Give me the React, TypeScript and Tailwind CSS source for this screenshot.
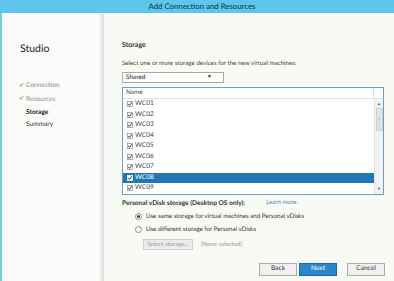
import React from "react";

const font = { fontFamily: 'Lato, "Open Sans", sans-serif' };

function Check({ light }: { light?: boolean }) {
  return (
    <svg width="6" height="6" viewBox="0 0 6 6" className="shrink-0">
      <rect x="0.4" y="0.4" width="5.2" height="5.2" fill="#fff" stroke={light ? "#fff" : "#8a8a8a"} strokeWidth="0.7" />
      <path d="M1.2 3.1 L2.5 4.4 L4.9 1.3" fill="none" stroke="#222" strokeWidth="1" />
    </svg>
  );
}

const rows = ["WC01", "WC02", "WC03", "WC04", "WC05", "WC06", "WC07", "WC08", "WC09"];

export default function App() {
  return (
    <div className="w-[394px] h-[281px] flex flex-col overflow-hidden bg-[#f8faf4] [text-rendering:geometricPrecision]" style={font}>
      <div className="h-[13px] shrink-0 bg-[#5ec6ec] flex items-center justify-center text-[7.8px] leading-none text-[#10303f]">
        <span className="ml-[10px]">Add Connection and Resources</span>
      </div>
      <div className="flex flex-1 min-h-0 border-l-2 border-[#6fd0d6]">
        {/* Sidebar */}
        <div className="w-[102px] shrink-0 relative bg-[#fbfcf9] flex flex-col">
          <div className="pl-[18px] mt-[29px] text-[10.5px] leading-[14px] text-[#222]">Studio</div>
          <div className="mt-[23px] flex flex-col text-[6.6px] leading-[13px]">
            <div className="flex items-center pl-[17px] text-[#8a8a8a]">
              <span className="w-[7px] text-[#7aa57a] text-[6px]">✔</span>Connection
            </div>
            <div className="flex items-center pl-[17px] text-[#8a8a8a] leading-[14px]">
              <span className="w-[7px] text-[#7aa57a] text-[6px]">✔</span>Resources
            </div>
            <div className="pl-[24px] font-bold text-[#222] leading-[12px]">Storage</div>
            <div className="pl-[24px] text-[#333] leading-[13px]">Summary</div>
          </div>
          <div className="absolute right-0 top-0 bottom-0 w-[6px] bg-gradient-to-r from-[#fbfcf9] to-[#dcdce2]" />
        </div>
        {/* Main */}
        <div className="flex-1 flex flex-col pl-[18px] pr-[8px] text-[#333]">
          <div className="mt-[27px] text-[7px] leading-[10px] font-bold text-[#333]">Storage</div>
          <div className="mt-[9px] text-[6.2px] leading-[10px] text-[#444]">
            Select one or more storage devices for the new virtual machines:
          </div>
          <div className="mt-[3px] w-[102px] h-[11px] border border-[#a8a8a8] bg-white flex items-center justify-between px-[3px] text-[6.4px] text-[#222]">
            <span>Shared</span>
            <span className="text-[5px] mr-[8px]">▼</span>
          </div>
          <div className="mt-[4px] w-[262px] border border-[#6e9cc4] bg-white flex flex-col">
            <div className="h-[11px] flex border-b border-[#e2e2e2] text-[6.4px] text-[#444]">
              <div className="flex-1 flex items-center pl-[3px] border-r border-[#dcdcdc]">Name</div>
              <div className="w-[9px]" />
            </div>
            <div className="flex">
              <div className="flex-1 flex flex-col">
                {rows.map((r) => {
                  const sel = r === "WC08";
                  return (
                    <div
                      key={r}
                      className={
                        "h-[10.5px] flex items-center gap-[2px] pl-[4px] text-[6.6px] " +
                        (sel ? "bg-[#1f78b5] text-white" : "text-[#444]")
                      }
                    >
                      <Check light={sel} />
                      <span>{r}</span>
                    </div>
                  );
                })}
              </div>
              <div className="w-[9px] bg-[#f2f2f2] border-l border-[#e4e4e4] flex flex-col items-center">
                <div className="h-[9px] flex items-center text-[4px] text-[#555]">▲</div>
                <div className="w-[7px] h-[23px] bg-[#e2e2e2] border border-[#cfcfcf] flex items-center justify-center text-[4px] text-[#888]">≡</div>
                <div className="flex-1" />
                <div className="h-[9px] flex items-center text-[4px] text-[#555]">▼</div>
              </div>
            </div>
          </div>
          <div className="mt-[3px] flex items-center h-[10px] text-[6.6px] leading-[10px]">
            <span className="font-bold text-[#333]">Personal vDisk storage (Desktop OS only):</span>
            <span className="ml-[21px] text-[#4a8fc8] text-[6.2px]">Learn more.</span>
          </div>
          <div className="mt-[4px] pl-[13px] flex items-center gap-[4px] h-[10px] text-[6.2px] text-[#333]">
            <span className="w-[7px] h-[7px] rounded-full border border-[#8a8a8a] bg-white flex items-center justify-center">
              <span className="w-[3px] h-[3px] rounded-full bg-[#333]" />
            </span>
            Use same storage for virtual machines and Personal vDisks
          </div>
          <div className="mt-[3px] pl-[13px] flex items-center gap-[4px] h-[10px] text-[6.2px] text-[#333]">
            <span className="w-[7px] h-[7px] rounded-full border border-[#8a8a8a] bg-white" />
            Use different storage for Personal vDisks
          </div>
          <div className="mt-[4px] pl-[21px] flex items-center h-[11px]">
            <div className="w-[50px] h-[11px] border border-[#cfcfcf] bg-[#ececec] flex items-center justify-center text-[6px] text-[#999]">
              Select storage...
            </div>
            <span className="ml-[8px] text-[6px] text-[#999]">(None selected)</span>
          </div>
          <div className="mt-[13px] flex justify-end pr-[1px] gap-[2px] h-[13px]">
            <div className="w-[38px] h-[13px] border border-[#acacac] bg-[#f0f0f0] flex items-center justify-center text-[6.6px] text-[#333]">Back</div>
            <div className="w-[38px] h-[13px] border border-[#1c6aa8] bg-[#2b86c8] flex items-center justify-center text-[6.6px] text-white">Next</div>
            <div className="w-[38px] h-[13px] ml-[8px] border border-[#acacac] bg-[#f0f0f0] flex items-center justify-center text-[6.6px] text-[#333]">Cancel</div>
          </div>
        </div>
      </div>
    </div>
  );
}
